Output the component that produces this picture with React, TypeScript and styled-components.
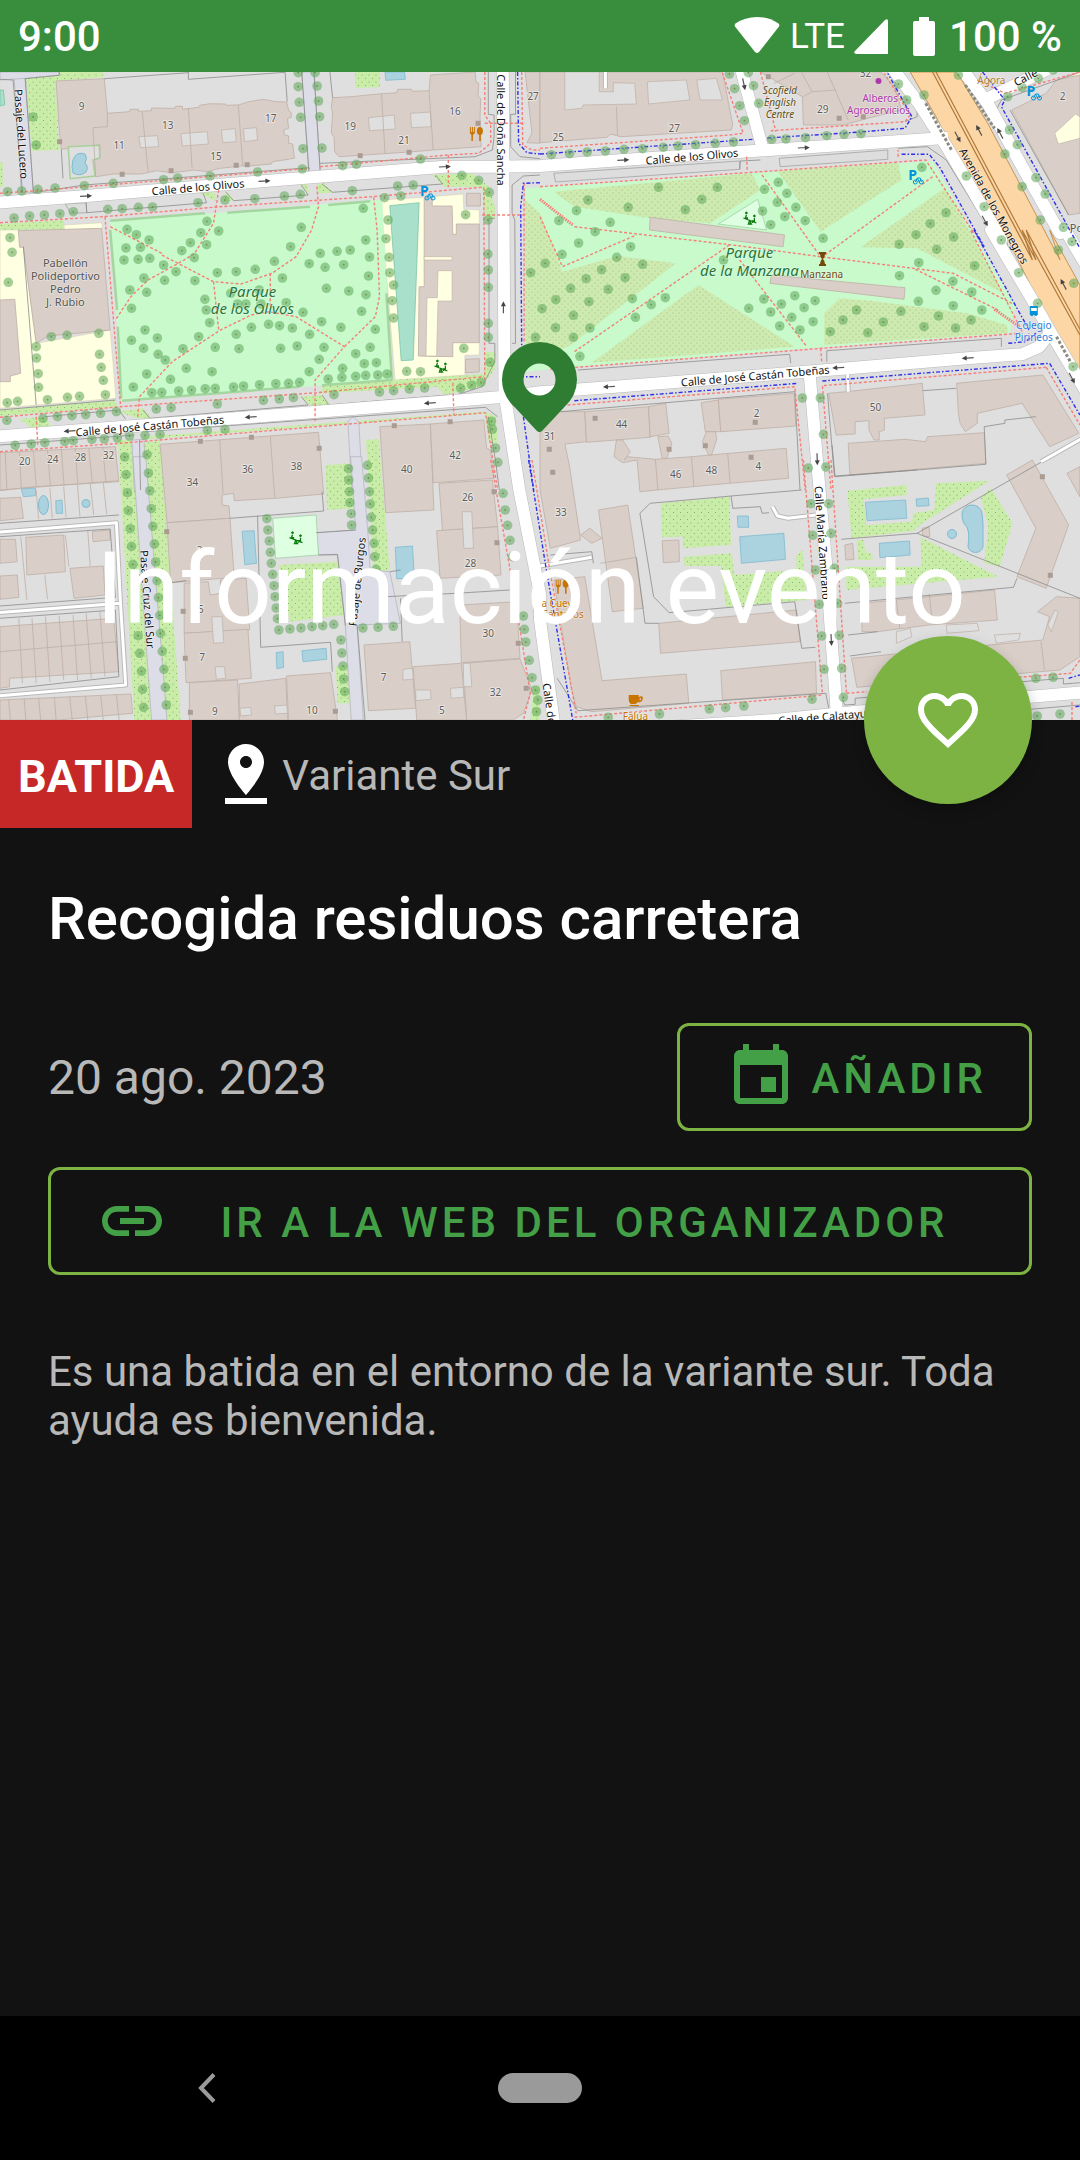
import React from "react";
import styled, { createGlobalStyle } from "styled-components";

/* ---------- global ---------- */

const GlobalStyle = createGlobalStyle`
  *, *::before, *::after { box-sizing: border-box; }
  body {
    margin: 0;
    background: #121212;
    font-family: Roboto, "Noto Sans", sans-serif;
  }
  h1, h2, p { margin: 0; }
`;

const Screen = styled.div`
  display: flex;
  flex-direction: column;
  min-height: 100vh;
  background: #121212;
  color: #ffffff;
`;

/* ---------- status bar ---------- */

const StatusBar = styled.header`
  display: flex;
  align-items: center;
  justify-content: space-between;
  height: 72px;
  padding: 2px 18px 0;
  background: #388e3c;
  font-size: 42px;
  font-weight: 500;
  line-height: 48px;
`;

const StatusIcons = styled.div`
  display: flex;
  align-items: center;
`;

const Network = styled.span`
  margin: 0 8px 0 10px;
  font-size: 35px;
  font-weight: 400;
`;

const Percent = styled.span`
  margin-left: 14px;
`;

/* ---------- hero ---------- */

const Hero = styled.section`
  position: relative;
  height: 648px;
`;

const MapCanvas = styled.svg`
  display: block;
  width: 100%;
  height: 100%;
  background: #dfdfdf;
`;

const HeroTitle = styled.h1`
  position: absolute;
  left: 96px;
  bottom: 71px;
  font-size: 101px;
  font-weight: 400;
  line-height: 120px;
  white-space: nowrap;
`;

const FavoriteButton = styled.button`
  position: absolute;
  right: 48px;
  bottom: -84px;
  display: flex;
  align-items: center;
  justify-content: center;
  width: 168px;
  height: 168px;
  padding: 0;
  border: 0;
  border-radius: 50%;
  background: #7cb342;
  color: #ffffff;
  box-shadow: 0 6px 14px rgba(0, 0, 0, 0.24);
`;

/* ---------- event details ---------- */

const TagRow = styled.div`
  display: flex;
  align-items: center;
  height: 108px;
`;

const Tag = styled.span`
  display: flex;
  align-items: center;
  height: 100%;
  padding: 4px 18px 0;
  background: #c62828;
  font-size: 45px;
  font-weight: 700;
`;

const Place = styled.span`
  display: flex;
  align-items: center;
  margin-left: 18px;
  color: #b8b8b8;
  font-size: 42px;
`;

const PlaceIcon = styled.span`
  display: flex;
  color: #ffffff;
`;

const PlaceName = styled.span`
  padding-top: 2px;
`;

const Details = styled.main`
  display: flex;
  flex-direction: column;
  padding: 56px 48px 48px;
`;

const EventName = styled.h2`
  font-size: 60px;
  font-weight: 500;
  line-height: 70px;
`;

const DateRow = styled.div`
  display: flex;
  align-items: center;
  justify-content: space-between;
  margin-top: 69px;
`;

const EventDate = styled.time`
  padding-top: 2px;
  color: #b8b8b8;
  font-size: 48px;
  line-height: 56px;
`;

const OutlinedButton = styled.button`
  display: flex;
  align-items: center;
  gap: 14px;
  height: 108px;
  padding: 0 42px 0 45px;
  border: 3px solid #7cb342;
  border-radius: 12px;
  background: transparent;
  color: #43a047;
  font-family: inherit;
  font-size: 42px;
  font-weight: 500;
  letter-spacing: 4px;
  text-transform: uppercase;
`;

const WideButton = styled(OutlinedButton)`
  width: 100%;
  margin-top: 36px;
`;

const ButtonLabel = styled.span`
  flex: 1;
  padding-top: 2px;
  text-align: center;
  white-space: nowrap;
`;

const Description = styled.p`
  margin-top: 72px;
  color: #b8b8b8;
  font-size: 42px;
  line-height: 49px;
`;

/* ---------- navigation bar ---------- */

const NavBar = styled.nav`
  display: grid;
  grid-template-columns: repeat(3, 1fr);
  align-items: center;
  justify-items: center;
  height: 144px;
  margin-top: auto;
  padding: 0 41px;
  background: #000000;
`;

const NavButton = styled.button`
  display: flex;
  align-items: center;
  justify-content: center;
  width: 120px;
  height: 96px;
  padding: 0;
  border: 0;
  background: transparent;
  color: #9a9a9a;
`;

const HomePill = styled.span`
  width: 84px;
  height: 30px;
  border-radius: 15px;
  background: #9a9a9a;
`;

/* ---------- icons ---------- */

const Icon = ({ d }: { d: string }) => (
  <svg width="72" height="72" viewBox="0 0 24 24" fill="currentColor" aria-hidden="true">
    <path d={d} />
  </svg>
);

const ICONS = {
  heart:
    "M16.5 3c-1.74 0-3.41.81-4.5 2.09C10.91 3.81 9.24 3 7.5 3 4.42 3 2 5.42 2 8.5c0 3.78 3.4 6.86 8.55 11.54L12 21.35l1.45-1.32C18.6 15.36 22 12.28 22 8.5 22 5.42 19.58 3 16.5 3zm-4.4 15.55l-.1.1-.1-.1C7.14 14.24 4 11.39 4 8.5 4 6.5 5.5 5 7.5 5c1.54 0 3.04.99 3.57 2.36h1.87C13.46 5.99 14.96 5 16.5 5c2 0 3.5 1.5 3.5 3.5 0 2.89-3.14 5.74-7.9 10.05z",
  pinDrop:
    "M18 8c0-3.31-2.69-6-6-6S6 4.69 6 8c0 4.5 6 11 6 11s6-6.5 6-11zm-8 0c0-1.1.9-2 2-2s2 .9 2 2-.89 2-2 2-2-.9-2-2zM5 20v2h14v-2H5z",
  event:
    "M17 12h-5v5h5v-5zM16 1v2H8V1H6v2H5c-1.11 0-1.99.9-1.99 2L3 19c0 1.1.89 2 2 2h14c1.1 0 2-.9 2-2V5c0-1.1-.9-2-2-2h-1V1h-2zm3 18H5V8h14v11z",
  link:
    "M3.9 12c0-1.71 1.39-3.1 3.1-3.1h4V7H7c-2.76 0-5 2.24-5 5s2.24 5 5 5h4v-1.9H7c-1.71 0-3.1-1.39-3.1-3.1zM8 13h8v-2H8v2zm9-6h-4v1.9h4c1.71 0 3.1 1.39 3.1 3.1s-1.39 3.1-3.1 3.1h-4V17h4c2.76 0 5-2.24 5-5s-2.24-5-5-5z",
};

/* ---------- map data ---------- */

/* Each sheet stores its points in its own grid; SHEETS gives the sheet origins on the map. */
type Sheet = "A" | "B" | "C" | "D" | "E" | "F";
const SHEETS: Record<Sheet, [number, number]> = {
  A: [0, 0],
  B: [540, 0],
  C: [0, 230],
  D: [540, 230],
  E: [0, 460],
  F: [540, 460],
};

const place = (s: Sheet, x: number, y: number): [number, number] => [
  Math.round((SHEETS[s][0] + x / 2.904) * 10) / 10,
  Math.round((SHEETS[s][1] + y / 3) * 10) / 10,
];

/* "A 1,2 3,4 C 5,6" -> map points, switching sheet at each letter */
const trace = (line: string): [number, number][] => {
  let sheet: Sheet = "A";
  const out: [number, number][] = [];
  line.split(/\s+/).forEach((token) => {
    if (token in SHEETS) sheet = token as Sheet;
    else if (token) {
      const [x, y] = token.split(",").map(Number);
      out.push(place(sheet, x, y));
    }
  });
  return out;
};

const points = (line: string) => trace(line).map((p) => p.join(",")).join(" ");

const Areas = ({ list, ...rest }: { list: string[] } & React.SVGProps<SVGPolygonElement>) => (
  <>
    {list.map((l, i) => (
      <polygon key={i} points={points(l)} {...(rest as any)} />
    ))}
  </>
);

const Lines = ({ list, ...rest }: { list: string[] } & React.SVGProps<SVGPolylineElement>) => (
  <>
    {list.map((l, i) => (
      <polyline key={i} points={points(l)} fill="none" {...(rest as any)} />
    ))}
  </>
);

const PARKS = [
  "A 320,665 1085,600 1110,600 1140,1140 355,1205",
  "D -43,-125 630,-172 1140,-207 1380,230 1365,310 820,352 60,415 -43,425",
];
const SCRUB = [
  "B 40,575 615,520 640,570 495,670 320,655 100,620",
  "B 690,513 1040,488 1050,540 815,695",
  "B 1175,565 1230,660 1345,880 1095,745 930,742",
  "D -43,-90 0,-50 65,125 225,78 395,100 90,345 20,380 -43,340",
  "D 460,165 740,350 150,398",
  "D 825,250 870,205 960,212 1240,250 1355,285 1360,310 825,345",
];
const GRASS = [
  "A 75,235 160,228 172,450 92,453",
  "A 160,228 170,216 300,216 300,232 163,243",
  "A 1030,216 1103,216 1103,262 1033,264",
  "A 0,485 8,490 8,560 0,560",
  "A 0,672 185,660 187,688 0,690",
  "A 185,615 215,612 225,640",
  "A 580,580 620,575 630,605",
  "A 655,572 680,600 650,605",
  "A 870,555 890,550 900,582",
  "A 920,552 940,550 968,578 925,580",
  "A 1255,525 1370,520 1420,560 1437,620 1437,655 1410,655 1400,560 1290,560",
  "C 0,540 335,510 340,530 0,558",
  "C 55,567 130,560 150,590 95,595",
  "C 345,545 415,535 440,565 400,565",
  "C 870,500 935,495 960,525 905,528",
  "C 935,465 1405,432 1412,366 1440,366 1436,420 1395,470 1290,495 1270,470 935,490",
  "C 415,620 1410,545 1440,560 1445,640 1420,640 1408,550 420,628",
  "E 342,-60 383,-60 440,780 390,780",
  "E 415,-50 465,-60 525,780 465,780",
  "E 945,15 1025,10 1028,145 950,150",
  "E 1063,-60 1100,-62 1132,330 1085,335",
  "E 810,315 985,305 998,465 842,485",
  "E 975,620 1010,615 1015,730 980,730",
  "E 1550,680 1568,675 1568,780 1540,780",
  "F 350,130 550,110 555,255 415,265 415,230 355,232",
  "F 418,290 557,280 565,345 720,332 745,325 745,285 762,270 775,420 540,440 525,318 420,318",
  "F 893,92 1065,75 1065,105 940,118 947,195 1080,185 1085,160 1145,150 1150,70 1305,62 1110,190 1085,212 905,235",
  "F 1105,232 1330,350 890,390 888,320 1108,320",
  "F 920,240 940,240 945,278 965,280 965,300 925,300",
  "F 1280,112 1310,85 1372,190 1335,320 1290,310 1302,200",
];
const SCHOOL = [
  "A 0,690 53,690 68,742 105,1030 320,990 337,1195 0,1225",
  "A 185,675 295,668 298,685 187,692",
  "A 1105,600 1228,592 1345,582 1347,628 1392,630 1392,1065 1350,1066 1350,1125 1147,1140",
  "B 1515,245 1568,216 1568,248 1525,262",
];
const SQUARES = [
  "A 40,216 73,216 97,578 62,578",
  "A 0,216 172,216 172,225 73,235 0,240",
  "A 876,216 912,216 930,515 897,515",
  "C 383,630 418,628 425,780 390,780",
  "E 386,-10 423,-10 485,780 440,780",
  "C 1010,575 1025,560 1042,575 1053,780 1022,780",
  "E 1018,-10 1050,-10 1068,215 1075,330 1132,335 1163,490 1037,495 1055,780 1020,780 1003,497 980,285 925,285 918,218 1033,210",
];
const BUILDINGS = [
  "A 163,243 303,236 312,340 375,335 378,328 402,328 402,334 440,332 440,324 508,325 510,319 530,319 530,328 578,322 580,316 610,311 655,312 657,316 692,315 722,305 765,298 800,305 832,306 838,330 846,340 846,352 835,356 838,385 824,390 826,404 838,408 838,430 850,432 855,475 792,485 788,492 720,498 700,498 640,505 600,515 565,510 500,518 455,512 410,522 330,522 278,530 270,480 290,475 290,434 178,448 173,400",
  "A 966,293 1020,290 1060,286 1108,281 1152,278 1155,268 1195,268 1198,274 1246,272 1250,225 1380,216 1382,245 1390,250 1388,290 1396,295 1394,350 1397,440 1258,450 1200,455 1060,465 985,470 972,455 970,410 962,400 966,340 962,320",
  "A 1525,216 1568,216 1568,430 1530,428 1545,400",
  "A 53,692 295,685 320,990 140,1008 105,1030 68,742 57,742",
  "C 0,210 43,208 60,430 30,438 30,455 0,455",
  "A 1232,595 1255,595 1255,618 1313,618 1315,703 1325,703 1325,672 1392,672 1392,1028 1315,1028 1315,1070 1215,1068 1217,860 1232,860",
  "A 1355,580 1395,580 1395,618 1355,618",
  "C 1352,388 1392,386 1392,426 1352,428",
  "B 0,216 530,216 560,375 555,390 235,410 205,402 195,412 0,428",
  "B 640,216 990,216 1030,260 1050,330 970,350 880,375 765,375 762,290",
  "B 1370,330 1470,280 1500,240 1568,225 1568,640 1535,645",
  "B 320,652 710,705 706,740 318,690",
  "D 672,135 1060,173 1057,208 668,160",
  "C 0,668 335,650 345,755 100,770 0,782",
  "C 465,643 925,607 940,792 800,805 680,812 678,790 645,795 645,825 665,828 668,865 485,878",
  "E 1103,-100 1250,-108 1260,150 1120,158",
  "E 1250,-108 1405,-120 1413,-35 1425,-30 1435,55 1258,68",
  "E 1275,70 1430,60 1445,200 1285,212",
  "E 1268,212 1445,200 1455,345 1278,355",
  "E 1335,435 1500,425 1510,595 1340,608",
  "E 1345,610 1510,597 1545,690 1520,760 1490,780 1355,780",
  "E 1057,555 1190,545 1207,745 1070,752",
  "E 1200,620 1340,610 1355,780 1210,780",
  "E 485,188 668,175 680,352 495,368",
  "E 535,370 605,365 610,405 640,400 640,360 715,355 725,510 535,520",
  "E 535,520 720,508 730,655 540,668",
  "E 550,668 690,660 695,780 550,780",
  "E 695,672 830,655 835,780 695,780",
  "E 832,648 960,638 980,780 838,780",
  "E 75,232 185,225 190,335 78,345",
  "E 203,325 300,318 305,405 215,415",
  "E 0,238 45,238 50,305 0,310",
  "E 0,348 50,345 55,412 0,418",
  "E 268,215 318,210 320,240 270,245",
  "E 0,500 330,475 345,635 28,655 28,680 0,685",
  "E 0,720 380,702 385,760 170,780 0,780",
  "E 0,115 60,112 68,175 0,182",
  "D 0,545 130,545 135,635 72,642 85,705 118,930 30,955 0,780",
  "D 130,545 315,530 320,622 135,637",
  "D 315,530 365,520 375,610 320,620",
  "D 468,518 518,510 525,605 480,605",
  "D 518,508 738,490 743,588 525,605",
  "D 222,630 240,630 262,665 245,690 255,680 335,688 440,680 715,655 722,745 550,760 340,780 290,785 282,690 240,698 215,680",
  "D 342,620 372,618 383,640 368,685 355,685",
  "D 483,605 510,605 513,628 498,675 490,675 472,635",
  "D 838,490 890,485 1110,460 1118,555 1000,565 1000,600 985,605 985,630 970,630 955,600 955,572 915,575 915,612 860,615",
  "D 895,640 1060,628 1120,635 1125,620 1290,608 1295,700 900,735",
  "D 1210,460 1460,435 1565,610 1480,650 1400,520 1270,550 1270,580 1235,605 1220,580 1215,550",
  "F 1355,45 1430,0 1535,195 1470,385 1385,350 1440,205",
  "F 170,150 255,135 300,445 210,455",
  "F 118,225 145,205 180,235 150,250",
  "F 355,242 403,240 405,305 358,308",
  "F 40,360 130,350 180,662 425,642 432,730 150,755 105,740 90,680",
  "F 345,490 745,450 755,545 350,580",
  "F 525,632 800,605 803,700 530,720",
  "F 935,430 1320,390 1328,480 1130,495 980,515 935,515",
  "F 905,595 1100,575 1460,540 1480,470 1445,455 1500,410 1568,415 1568,590 1510,630 920,682",
  "F 885,255 908,250 912,298 888,300",
  "F 1110,205 1130,200 1132,230 1112,228",
  "F 1530,40 1568,20 1568,110",
];
const COURTS = [
  "A 403,410 457,407 461,440 408,443",
  "A 525,401 602,395 605,432 530,438",
  "A 643,390 683,386 686,425 647,428",
  "A 707,386 745,383 748,420 710,425",
  "A 1070,353 1145,345 1148,387 1073,392",
  "A 1192,340 1250,336 1252,380 1195,383",
  "B 72,216 172,216 172,275 213,275 213,248 275,250 280,312 125,315 122,325 72,330",
  "B 312,245 425,240 435,300 315,312",
  "B 455,240 512,235 530,300 465,300",
  "E 615,470 645,470 650,548 620,550",
  "E 625,620 652,620 655,655 628,658",
  "E 1342,155 1370,155 1375,265 1347,265",
  "E 1345,610 1365,610 1370,680 1347,680",
  "E 1170,628 1198,625 1200,658 1170,660",
  "E 1207,690 1250,690 1252,718 1208,722",
  "E 1308,685 1345,682 1347,712 1310,715",
  "E 797,738 833,735 835,760 800,762",
  "E 697,745 728,742 730,765 699,768",
  "F 1035,515 1075,505 1080,530 1035,550",
  "F 1180,495 1270,490 1275,512 1182,520",
  "F 1320,525 1395,520 1390,540 1325,550",
  "F 1475,495 1495,450 1505,455 1485,515",
];
const WATER = [
  "A 1118,216 1175,216 1177,238 1120,241",
  "F 945,127 1062,120 1065,175 950,182",
  "F 1092,117 1128,114 1130,137 1094,139",
  "F 985,250 1073,243 1075,285 987,293",
  "F 580,230 708,220 713,298 585,310",
  "F 573,168 605,168 606,202 575,202",
  "E 703,214 738,212 745,310 711,314",
  "E 1148,262 1198,258 1203,355 1152,356",
  "E 877,572 947,565 949,598 880,605",
  "E 802,578 822,575 824,622 804,626",
  "E 62,87 103,84 103,107 68,110",
  "E 162,122 180,120 182,160 163,160",
];
const PITCHES = ["A 1132,617 1217,608 1200,1080 1165,1082", "A 0,270 10,270 14,314 0,318"];
const YARDS = [
  "C 1272,122 1313,122 1313,213 1272,213 1268,378 1237,378 1240,203 1270,203",
  "C 1232,80 1313,80 1313,90 1232,90",
  "B 1495,400 1555,342 1568,350 1568,415 1505,432",
];
const PLAYGROUNDS = ["E 792,175 918,165 925,285 800,295", "B 632,598 658,690 518,672"];
const PARKING = [
  "A 190,612 250,608 252,638 205,640",
  "B 40,520 580,483 580,508 45,546",
  "B 695,475 1010,450 1010,478 697,500",
];

const WALLS = [
  "A 413,335 430,515", "A 547,325 558,505", "A 692,315 705,498", "A 270,383 312,380", "A 270,383 278,530", "A 312,340 312,380",
  "A 1108,281 1118,460", "A 1246,272 1258,450", "B 222,320 225,405",
  "B 760,218 790,275 765,290", "B 790,275 860,270", "B 835,218 895,360", "B 680,250 740,220",
  "C 638,630 648,790", "C 785,618 798,805",
  "C 15,665 20,780", "C 56,665 62,775", "C 97,660 105,770", "C 138,660 146,765", "C 178,658 186,765", "C 218,655 226,760", "C 258,655 268,760", "C 298,652 308,760",
  "D 335,688 342,780", "D 440,680 447,770", "D 545,670 552,760",
  "E 0,575 340,545", "E 55,475 65,670", "E 93,475 105,670", "E 132,470 145,665", "E 172,468 185,660", "E 212,465 225,660", "E 250,460 265,655", "E 290,455 305,650",
  "E 25,720 30,780", "E 70,715 75,780", "E 112,713 118,780", "E 158,712 163,780", "E 202,710 210,780", "E 248,708 255,780", "E 292,706 300,780", "E 338,704 346,780",
  "E 105,90 112,178", "E 145,85 152,175", "E 185,80 192,172", "E 225,75 232,170", "E 262,70 272,165", "E 300,68 310,162",
  "E 60,230 78,420", "E 130,345 138,418", "E 190,225 200,320", "E 255,212 262,318", "E 0,90 345,62",
  "F 175,310 280,292", "F 1035,420 1045,505", "F 1130,402 1140,490", "F 1455,545 1465,630",
];
const FENCES = [
  "A 303,236 547,218", "A 547,216 547,238 828,217 834,305", "A 958,216 966,293", "A 172,216 172,226 73,236", "A 178,448 183,535",
  "A 0,238 38,240 65,575", "A 73,235 97,578 245,555 897,503", "A 876,216 897,515", "A 912,216 930,515", "A 930,490 1380,470 1430,450 1435,410 1435,345 1418,343 1418,216",
  "A 1497,216 1497,343 1483,343 1483,440 1510,470 1568,476", "A 1568,525 1520,528 1487,555 1487,640 1495,660 1497,1030 1487,1030",
  "A 250,608 252,638 600,608 590,580", "A 655,575 678,602 895,585 875,555", "A 935,552 965,577 1285,552 1265,525",
  "A 1437,655 1420,655 1420,1030 1437,1030 C 1437,395 1400,470 1325,495",
  "C 68,50 105,525", "C 0,540 335,510", "C 130,560 345,540 365,568", "C 415,540 435,565 895,525 875,500", "C 935,495 955,525 1300,495",
  "C 0,645 390,615", "C 420,605 1410,532 1445,560", "C 405,630 408,780", "C 1418,560 1440,700 1450,780",
  "D 110,420 725,373 728,400", "D 833,395 833,362 1340,325 1340,350", "D 60,545 740,485 755,780",
  "D 1112,482 1208,475", "D 848,645 857,740 1295,703 1290,590 1350,580 1350,570 1440,560", "D 835,490 855,740",
  "F 857,48 1095,30", "F 1095,220 1568,-60", "F 1095,220 1568,415", "F 875,238 1095,220", "F 290,160 320,130 555,108 560,145 640,140 645,160 665,158",
  "F 290,160 330,410 375,458 740,425 760,565 800,562", "F 555,108 760,90", "F 280,292 305,490 345,490", "F 885,430 1375,382 1385,355",
  "F 30,285 150,275 155,310", "F 895,525 980,515", "F 900,588 990,575",
  "F 50,655 110,752 830,700 845,780", "F 875,710 885,735 915,733 915,715 950,712", "F 1400,665 1520,655 1520,672 1568,668", "F 1400,750 1568,735",
  "E 668,175 940,153 935,95", "E 748,167 757,562 960,547 965,635", "E 918,218 1033,210", "E 1132,335 1163,330", "E 1120,410 1325,400 1480,390",
  "E 1163,415 1168,545", "E 0,190 345,165", "E 0,230 320,207 335,412 0,438", "E 0,475 335,450 345,650 0,690", "E 495,368 540,362", "E 1037,495 1060,780", "E 925,285 980,283 1003,497",
  "B 1320,340 1340,300 1568,216", "B 1320,340 1330,370 1568,790", "B 1365,330 1535,645", "B 1040,445 1125,440 1180,480 1370,800", "B 1060,365 1095,350 1095,300", "B 580,508 582,483 640,480",
];

const DASHED_RED = [
  "A 0,580 110,572 900,505", "A 930,500 1300,465 1390,460 1425,430 1425,370 1408,345 1408,216",
  "A 0,668 300,650 640,620 1080,590 1400,562", "A 1405,562 1408,1140", "A 305,650 350,1215",
  "C 0,562 350,530 920,488 1405,440", "C 0,665 350,640 920,590 1410,548 1445,780", "C 105,560 110,650", "C 1315,460 1318,555",
  "A 320,680 470,760 C 470,75 620,155 700,162 790,130 860,80 905,0 A 925,620 920,555",
  "A 635,570 620,670 565,760 C 535,90 430,150 380,200 335,270",
  "C 620,155 635,300", "C 785,130 785,230",
  "C 400,560 405,500 500,395 640,300 730,255 780,245 860,260 1000,350 915,450 915,580", "C 1000,350 1090,260 1102,200 1095,0 A 1085,590",
  "A 1302,465 1302,562", "A 1400,645 1525,645", "A 1408,370 1525,370",
  "B 0,445 550,405 590,400 530,220", "B 640,216 685,395", "B 670,392 1060,365 1075,345 1000,220",
  "A 1515,216 1518,435 1545,450 1568,450",
  "B 0,560 600,518 1120,480 1260,700 D 1250,0 1400,305", "D 30,418 820,355 1395,310",
  "B 100,680 560,735 815,770 D 1200,130 1370,220", "D 1090,118 1330,240",
  "B 1140,530 820,770", "B 645,525 815,770", "B 0,650 65,800 280,705", "D 550,45 100,365", "D 580,90 775,350", "B 600,470 602,515", "D 815,355 818,395",
  "B 1040,470 1040,450", "B 1270,240 1350,280 1568,216",
  "D 80,525 740,470 770,780", "D 1470,412 820,467 845,780", "D 1470,412 1568,585", "F 765,0 820,700", "F 845,0 890,700",
  "F 100,772 820,705", "F 890,700 950,695", "F 1390,652 1540,640 1568,600", "F 1545,780 1545,720",
  "E 1425,0 1490,380 1540,700 1520,780", "E 1545,0 F 30,340 105,760", "A 1522,550 1522,1030",
];
const DASHED_BLUE = [
  "A 1503,216 1506,430 1530,458 1568,462", "A 1568,548 1520,550 1512,620 1515,1050",
  "B 0,462 620,418", "B 660,414 930,396 1060,385 1080,350 1010,220", "B 1050,463 1130,463 1160,500 1290,740 D 1260,0 1420,300",
  "B 1285,216 1350,300 1340,320 1568,745", "D 100,512 750,460", "D 820,453 1480,400 1568,555",
  "D 1360,340 1410,335 1440,310", "C 1510,440 1568,440", "C 1520,560 1550,780", "E 1535,0 F 20,340 95,780", "F 1535,655 1568,645", "F 1555,740 1568,738",
];

const TREES =
  "A 22,575 63,573 110,568 160,564 245,557 329,550 475,539 516,534 610,528 748,516 878,507 995,497 1035,493 1221,477 41,654 86,648 129,645 174,641 213,635 313,628 355,626 402,622 443,621 575,608 653,600 740,596 826,588 872,583 1023,572 1155,558 1200,555 1117,593 1164,588 1341,526 1390,541 1421,577 1417,660 1417,762 1127,660 1121,716 1130,772 1352,644 96,351 105,435 866,260 869,307 873,352 880,446 921,258 925,303 928,350 935,444 866,218 915,218 29,713 35,757 369,688 396,704 433,720 366,744 408,742 601,664 583,698 553,728 528,752 635,693 600,734 564,773 875,682 844,740 1055,625 1062,720 1073,771 930,760 979,754 1017,750 " +
  "C 360,90 401,88 435,85 475,105 511,125 478,151 566,152 418,144 377,180 426,187 382,235 631,128 686,125 741,118 797,94 820,144 898,101 944,112 998,104 1070,138 948,175 1013,183 1063,194 1050,244 595,208 599,240 609,278 670,190 690,222 714,222 758,222 753,180 831,218 880,247 934,275 990,292 1090,298 421,300 457,324 382,331 417,355 459,373 480,390 577,320 531,356 541,415 616,425 625,352 694,356 686,313 730,292 780,283 812,287 849,294 899,313 815,355 863,348 941,352 927,388 898,425 1033,371 1075,352 1058,401 1093,398 1124,432 1097,435 1062,436 1033,439 995,415 993,442 953,447 426,432 387,471 495,448 441,488 470,487 519,483 556,480 596,476 625,475 678,471 707,468 754,464 801,461 838,460 870,457 24,157 149,320 195,316 287,310 105,350 106,384 111,431 112,472 138,509 196,502 231,499 306,494 300,451 294,412 289,373 21,518 51,514 1132,128 1143,165 1139,212 1143,264 1181,424 1221,425 1347,355 1418,120 1418,172 1418,280 1418,322 1423,397 1397,457 1370,465 1338,475 1541,128 1555,322 454,537 497,533 631,522 765,511 811,507 852,503 970,494 1102,486 1143,482 1189,477 1233,474 20,571 125,565 167,560 209,557 249,554 292,550 338,545 44,646 91,642 130,638 188,635 213,632 267,628 303,627 341,624 376,618 421,616 465,613 602,601 653,598 362,681 427,674 1012,716 1067,706 1427,574 1430,598 1439,654 1446,697 " +
  "E 366,44 431,39 370,98 435,92 373,152 439,146 378,206 444,199 382,259 448,252 386,313 452,306 456,362 460,413 464,466 401,527 466,520 406,580 471,574 411,634 476,628 414,688 480,682 417,742 483,735 1013,60 1070,54 1015,95 1073,95 1016,128 1075,132 1020,161 1078,172 1021,195 1082,210 1086,250 1088,290 1092,328 775,176 778,210 782,243 785,277 788,310 792,343 796,377 799,410 802,444 806,476 810,510 842,507 874,504 906,500 937,497 969,493 1054,504 1098,502 1142,499 990,540 993,579 996,618 998,657 1001,695 1461,100 1467,150 1474,196 1481,241 1489,290 1520,468 1523,508 1527,546 1537,601 1545,653 1555,690 1562,720 1558,755 " +
  "B 550,222 605,218 565,266 620,257 580,317 635,310 594,362 33,464 86,461 137,456 190,453 244,448 298,446 358,442 401,438 452,434 509,430 562,426 673,418 714,417 771,413 833,407 883,403 932,401 344,562 515,562 139,600 106,632 256,622 470,598 422,629 55,662 204,667 160,695 112,729 64,763 263,740 223,772 646,633 652,568 692,547 717,580 689,607 743,622 711,650 770,662 670,674 822,715 1109,502 1179,638 1133,671 1092,704 1043,733 1201,711 1152,748 1238,528 1290,620 1340,720 1350,462 1400,560 1453,660 1505,750 1041,252 1065,300 1115,285 1215,225 1363,390 1386,434 1440,533 1467,582 1520,682 1545,725 1400,262 1447,235 1358,290 1490,210 " +
  "D 15,100 89,175 46,209 6,236 97,256 45,293 145,294 97,322 116,379 179,119 134,146 247,143 298,103 198,178 142,215 268,206 323,224 364,203 277,262 533,90 606,235 650,207 670,246 701,222 740,197 767,233 799,212 731,262 696,288 755,300 793,275 843,305 880,270 919,240 997,276 952,308 1048,244 1115,290 1157,258 1207,294 1252,270 1283,240 1200,227 1254,186 1199,154 1150,181 1099,214 1044,137 1100,98 1262,107 762,504 814,504 823,613 779,714 830,711 1390,128 1445,220 1550,160 1548,410 " +
  "F 787,131 838,131 792,226 845,220 800,330 855,325 811,433 864,430 818,528 869,526 825,628 876,625 790,718 881,712 198,772 347,762 492,747 539,743 592,738 1440,655 1490,652 1444,768 1510,762";

const ENTRANCES =
  "A 173,425 355,523 497,512 686,496 718,494 1046,467 1188,457 1388,370 C 582,634 730,622 927,655 1145,587 1307,575 E 484,215 532,454 538,595 553,757 974,754 1435,95 1443,248 1505,550 1528,685 B 663,230 869,355 939,350 D 160,565 375,658 480,647 625,577 613,682 27,658 37,727 F 1482,346 1459,50";

const NUMBERS: [Sheet, number, number, string][] = [
  ["A", 237, 319, "9"], ["A", 346, 435, "11"], ["A", 487, 374, "13"], ["A", 627, 469, "15"], ["A", 786, 354, "17"],
  ["A", 1017, 377, "19"], ["A", 1173, 420, "21"], ["A", 1321, 334, "16"], ["A", 1548, 287, "27"],
  ["B", 53, 412, "25"], ["B", 390, 385, "27"], ["B", 821, 326, "29"], ["B", 945, 220, "32"], ["B", 1518, 287, "2"],
  ["C", 72, 693, "20"], ["C", 153, 686, "24"], ["C", 234, 680, "28"], ["C", 315, 674, "32"],
  ["C", 559, 757, "34"], ["C", 719, 716, "36"], ["C", 861, 707, "38"], ["C", 1181, 716, "40"], ["C", 1322, 674, "42"],
  ["D", 28, 618, "31"], ["D", 237, 582, "44"], ["D", 629, 550, "2"], ["D", 974, 530, "50"],
  ["D", 394, 732, "46"], ["D", 498, 721, "48"], ["D", 634, 708, "4"],
  ["E", 1358, 110, "26"], ["E", 1366, 308, "28"], ["E", 1418, 520, "30"], ["E", 1439, 696, "32"], ["E", 580, 270, "3"], ["E", 583, 447, "5"],
  ["E", 587, 590, "7"], ["E", 624, 753, "9"], ["E", 906, 749, "10"], ["E", 1114, 650, "7"], ["E", 1283, 750, "5"],
  ["F", 61, 157, "33"],
];

const STREETS: [Sheet, number, number, number, string][] = [
  ["A", 575, 562, -5, "Calle de los Olivos"],
  ["B", 441, 470, -5, "Calle de los Olivos"],
  ["C", 435, 588, -5, "Calle de José Castán Tobeñas"],
  ["D", 625, 438, -5, "Calle de José Castán Tobeñas"],
  ["A", 62, 402, 86, "Pasaje del Lucero"],
  ["A", 1456, 390, 90, "Calle de Doña Sancha"],
  ["B", 1318, 618, 61, "Avenida de los Monegros"],
  ["E", 428, 418, 86, "Pasaje Cruz del Sur"],
  ["E", 1037, 365, -84, "Pasaje de Burgos"],
  ["F", 820, 248, 86, "Calle María Zambrano"],
  ["F", 830, 770, -5, "Calle de Calatayud"],
  ["F", 35, 790, 82, "Calle de Burgos"],
  ["B", 1410, 232, -27, "Calle"],
];

type Poi = [Sheet, number, number, string, string, number, boolean];
const POIS: Poi[] = [
  ["C", 733, 188, "Parque", "#2a7539", 15, true],
  ["C", 733, 241, "de los Olivos", "#2a7539", 15, true],
  ["D", 608, 72, "Parque", "#2a7539", 15, true],
  ["D", 608, 125, "de la Manzana", "#2a7539", 15, true],
  ["C", 190, 98, "Pabellón", "#555555", 11, false],
  ["C", 190, 137, "Polideportivo", "#555555", 11, false],
  ["C", 190, 177, "Pedro", "#555555", 11, false],
  ["C", 190, 217, "J. Rubio", "#555555", 11, false],
  ["B", 697, 271, "Scofield", "#5f5018", 10, true],
  ["B", 697, 307, "English", "#5f5018", 10, true],
  ["B", 697, 343, "Centre", "#5f5018", 10, true],
  ["B", 988, 293, "Alberos", "#ac39ac", 10, false],
  ["B", 983, 329, "Agroservicios", "#ac39ac", 10, false],
  ["B", 1311, 241, "Ágora", "#b08030", 10, false],
  ["B", 1562, 684, "Pol", "#555555", 11, false],
  ["D", 818, 131, "Manzana", "#734a08", 10, false],
  ["D", 1434, 284, "Colegio", "#2f7fe0", 10, false],
  ["D", 1434, 320, "Pirineos", "#2f7fe0", 10, false],
  ["F", 50, 428, "La Cueva", "#c77400", 10, false],
  ["F", 66, 463, "Cántaros", "#c77400", 10, false],
  ["F", 277, 768, "Falúa", "#c77400", 10, false],
];

const ARROWS: [Sheet, number, number, number][] = [
  ["A", 250, 588, -3], ["A", 768, 543, -3], ["A", 1292, 500, -3], ["B", 242, 480, -3], ["B", 766, 443, -3],
  ["C", 202, 603, 176], ["C", 728, 561, 176], ["C", 1248, 519, 176], ["C", 1462, 232, -90],
  ["D", 200, 470, 176], ["D", 866, 413, 176], ["D", 1242, 384, 176], ["D", 805, 688, 88], ["F", 846, 540, 87],
  ["B", 592, 253, 78], ["B", 1213, 411, 62], ["B", 1275, 391, -118], ["B", 1336, 400, -118], ["B", 1292, 663, 62], ["D", 1545, 445, 62], ["D", 1520, 163, -118],
];

const at = (s: Sheet, x: number, y: number) => `translate(${place(s, x, y).join(" ")})`;

const Bike = ({ s, x, y }: { s: Sheet; x: number; y: number }) => (
  <g transform={at(s, x, y)} stroke="#0092da" fill="none">
    <text x="-7" y="4" fontSize="14" fontWeight="700" fill="#0092da" stroke="none">P</text>
    <circle cx="0" cy="6" r="2" />
    <circle cx="6" cy="6" r="2" />
    <path d="M0 6l2-4h3l1 4M2 2l2 4" />
  </g>
);

const Seesaw = ({ s, x, y }: { s: Sheet; x: number; y: number }) => (
  <g transform={at(s, x, y)} fill="#0c7a0c" stroke="#0c7a0c">
    <circle cx="-3" cy="-5" r=".9" />
    <circle cx="5" cy="-2" r=".9" />
    <path d="M-3-3l-1 3h2v2M5 0v3h-2v2M-6 0L7 5M0 3l-1 3h3z" fill="none" strokeWidth="1.300" />
  </g>
);

const Fork = ({ s, x, y }: { s: Sheet; x: number; y: number }) => (
  <g transform={at(s, x, y)} fill="#c77400">
    <path d="M-6-7h1v5h1v-5h1v5h1v-5h1v6l-2 2v6h-1.500v-6l-1.500-2z" />
    <ellipse cx="4" cy="-3" rx="3" ry="4" />
    <path d="M3.300 0h1.600v7h-1.600z" />
  </g>
);

const StreetMap = () => (
  <MapCanvas viewBox="0 72 1080 648" preserveAspectRatio="xMidYMid slice" role="img" aria-label="Mapa">
    <defs>
      <pattern id="lawn" width="7" height="7" patternUnits="userSpaceOnUse">
        <rect width="7" height="7" fill="#c9eca8" />
        <circle cx="1.500" cy="1.500" r=".5" fill="#6f9f52" />
        <circle cx="5" cy="5" r=".5" fill="#6f9f52" />
      </pattern>
      <pattern id="scrub" width="6" height="6" patternUnits="userSpaceOnUse">
        <rect width="6" height="6" fill="#cdebb0" />
        <circle cx="1" cy="1" r=".5" fill="#96a56a" />
        <circle cx="4" cy="4" r=".5" fill="#96a56a" />
      </pattern>
    </defs>
    <rect y="72" width="1080" height="648" fill="#dfdfdf" />
    <Areas list={SCHOOL} fill="#ffffe2" stroke="#d8cfb8" strokeWidth=".6" />
    <Areas list={PARKS} fill="#c8facc" />
    <Areas list={SCRUB} fill="url(#scrub)" />
    <Areas list={GRASS} fill="url(#lawn)" />
    <Areas list={SQUARES} fill="#dddde8" stroke="#a9a9b4" strokeWidth=".6" />
    <Lines
      list={["A 320,662 595,640", "A 660,638 900,620", "A 953,615 1075,604", "A 320,690 340,930", "C 342,290 352,505", "C 1122,190 1138,448", "C 355,512 870,470", "C 935,466 1140,450"]}
      stroke="#a5d6a0" strokeWidth="2.500"
    />
    <Areas list={BUILDINGS} fill="#d9cfc8" stroke="#bfafa6" strokeWidth=".8" />
    <Areas list={COURTS} fill="#dfdfdf" stroke="#bfafa6" strokeWidth=".7" />
    <Areas list={YARDS} fill="#ffffe2" stroke="#bfafa6" strokeWidth=".6" />
    <Areas list={PARKING} fill="#dddddd" stroke="#9b9b9b" strokeWidth=".7" />
    <Areas list={PITCHES} fill="#a8e0cc" stroke="#7fc4a8" strokeWidth=".8" />
    <Areas list={PLAYGROUNDS} fill="#dfffe3" stroke="#9fcfa4" strokeWidth=".8" />
    <Areas list={WATER} fill="#aad3df" stroke="#7fbad0" strokeWidth=".8" />
    <Areas list={["A 198,440 288,436 290,473 270,480 276,528 204,536"]} fill="#dfdfdf" stroke="#a9cf9b" strokeWidth="1.500" />
    <path d="M73 160q3-9 12-6 3 4 0 9 4 4 1 9-6 5-13 1-2-6 0-13z" fill="#aad3df" stroke="#7fbad0" />
    <path d="M962 514a10 9 0 1 1 20 0q1 5 1 12t0 20a7 6 0 0 1-15 0q2-12-1-19-5-4-5-13z" fill="#aad3df" stroke="#7fbad0" />
    <circle cx="952" cy="534" r="4.500" fill="#aad3df" stroke="#7fbad0" />
    <ellipse cx="43.500" cy="505" rx="5" ry="9.500" fill="#aad3df" stroke="#7fbad0" />
    <circle cx="86" cy="503.500" r="4" fill="#aad3df" stroke="#7fbad0" />
    <Lines list={WALLS} stroke="#bfafa6" strokeWidth=".8" />
    <Lines list={FENCES} stroke="#8c8c8c" strokeWidth=".8" />

    {/* carriageways */}
    <Areas
      list={["B 1075,216 1150,350 1200,450 1370,780 D 1345,0 1450,220 1568,430 1568,165 1480,0 B 1510,780 1300,370 1210,216"]}
      fill="#fcd6a4" stroke="#c89450" strokeWidth="1"
    />
    <Lines list={["B 1140,216 1430,780 D 1400,0 1568,315", "B 1150,216 1440,780 D 1412,0 1568,298"]} stroke="#b07a3c" strokeWidth="1.200" />
    <g strokeLinejoin="round">
      {["#b9b9b9", "#ffffff"].map((color, i) => (
        <React.Fragment key={color}>
          <Lines
            list={[
              "A -20,609 250,588 770,543 1290,500 1440,500 B 0,498 240,480 760,443 1185,413",
              "A 1460,200 C 1465,490 1508,780 E 1568,400 F 0,480 42,800",
              "C -20,620 740,560 1250,518 1465,500 D 0,487 200,472 870,417 1240,385 1400,373 1450,350 1480,310",
              "B 582,200 645,440",
              "D 783,430 805,700 F 830,300 862,760",
              "F 200,812 680,780 950,752 1600,695",
              "B 1020,200 1100,310 1175,430 1250,560 1340,720 D 1310,0 1430,210 1490,320 1600,510",
              "B 1220,200 1300,310 1400,500 1510,700 D 1525,0 1600,130",
              "B 1300,295 1500,195",
            ]}
            stroke={color} strokeWidth={i ? 12 : 13}
          />
          <Lines
            list={["E -10,217 338,188 350,430 365,675 -10,708", "E -10,458 350,430", "D 893,420 895,485", "D 1455,695 1600,610", "F 0,318 150,292", "F 675,140 690,168 720,175 800,165", "B 190,200 190,265"]}
            stroke={color} strokeWidth={i ? 3 : 5}
          />
        </React.Fragment>
      ))}
    </g>

    <Lines list={DASHED_RED} stroke="#f58078" strokeWidth="1.400" strokeDasharray="3 2" />
    <Lines list={DASHED_BLUE} stroke="#3030ea" strokeWidth="1.400" strokeDasharray="4 2 1.500 2" />
    <Lines list={["B 0,598 95,675", "D 1320,238 1385,285"]} stroke="#f5807a" strokeWidth="3" strokeDasharray="1.500 1" />
    <Lines list={["B 1235,255 1320,385", "B 1120,310 1195,450", "D 1500,320 1540,395"]} stroke="#8a8a80" strokeWidth="3" strokeDasharray="3 2" />

    {trace(ENTRANCES).map(([x, y], i) => (
      <rect key={i} x={x - 2.5} y={y - 2.5} width="5" height="5" fill="#ab9c93" />
    ))}
    {trace(TREES).map(([x, y], i) => (
      <g key={i}>
        <circle cx={x} cy={y} r="4.800" fill="#5fa85a" fillOpacity=".56" />
        <circle cx={x} cy={y} r=".9" fill="#6a7a3c" fillOpacity=".7" />
      </g>
    ))}
    {ARROWS.map(([s, x, y, a], i) => (
      <g key={i} transform={`${at(s, x, y)} rotate(${a})`}>
        <path d="M-6 0H4" stroke="#555555" strokeWidth="1.200" />
        <path d="M1-2.500L6 0L1 2.500z" fill="#444444" />
      </g>
    ))}

    <g fontFamily="'Noto Sans', sans-serif" textAnchor="middle" strokeLinejoin="round">
      {NUMBERS.map(([s, x, y, t], i) => (
        <text key={i} transform={at(s, x, y)} y="4" fontSize="10" fill="#5c5c5c" stroke="#ebe6e2" strokeWidth="2" paintOrder="stroke">{t}</text>
      ))}
      {POIS.map(([s, x, y, t, color, size, italic], i) => (
        <text key={i} transform={at(s, x, y)} y="4" fontSize={size} fill={color} fontStyle={italic ? "italic" : "normal"} stroke="#ffffff" strokeOpacity=".4" strokeWidth="1.500" paintOrder="stroke">{t}</text>
      ))}
      {STREETS.map(([s, x, y, a, t], i) => (
        <text key={i} transform={`${at(s, x, y)} rotate(${a})`} y="4" fontSize="11" fill="#111111" stroke="#ffffff" strokeOpacity=".6" strokeWidth="1.500" paintOrder="stroke">{t}</text>
      ))}
    </g>

    <g fontFamily="'Noto Sans', sans-serif">
      <Bike s="A" x={1240} y={576} />
      <Bike s="B" x={1090} y={528} />
      <Bike s="B" x={1433} y={276} />
    </g>
    <Seesaw s="B" x={608} y={654} />
    <Seesaw s="C" x={1279} y={408} />
    <Seesaw s="E" x={858} y={233} />
    <Fork s="A" x={1382} y={402} />
    <Fork s="F" x={63} y={380} />
    <g transform={at("F", 275, 720)} fill="#c77400">
      <path d="M-6-5H4v2q5-2 4 2t-5 3q-1 2-3 2h-4q-2-2-2-4zM5-2v3q2-1 1-3zM-5 5H4v1h-9z" />
    </g>
    <path transform={at("D", 819, 87)} d="M-3-7h7v2h-1q0 3-2 5 2 2 2 5h1v2h-7v-2h1q0-3 2-5-2-2-2-5h-1z" fill="#734a08" />
    <path transform={at("D", 1434, 243)} d="M-4-5h8v9h-1v1h-2v-1h-2v1h-2v-1h-1zM-3-3v3h6v-3z" fill="#0092da" fillRule="evenodd" />
    <circle cx="878.500" cy="81" r="3" fill="#ac39ac" />

    {/* event marker */}
    <path
      d="M539.500 342a37.500 37.500 0 0 1 37.500 37.500q0 16-13 28l-21.500 23q-3 3-6 0l-21.500-23q-13-12-13-28A37.500 37.500 0 0 1 539.500 342zm0 21.500a16 16 0 1 0 0 32 16 16 0 0 0 0-32z"
      fill="#2e7d32" fillRule="evenodd"
    />
  </MapCanvas>
);

/* ---------- page ---------- */

export default function App() {
  return (
    <Screen>
      <GlobalStyle />
      <StatusBar>
        <span>9:00</span>
        <StatusIcons>
          <svg width="46" height="40" viewBox="0 0 46 40" fill="#ffffff" aria-hidden="true">
            <path d="M1 9.500Q0 8 1.500 6.500 11 0 23 0t21.500 6.500Q46 8 45 9.500L25 35q-2 2-4 0z" />
          </svg>
          <Network>LTE</Network>
          <svg width="36" height="36" viewBox="0 0 36 36" fill="#ffffff" aria-hidden="true">
            <path d="M32 1q3-2 3 1v33H3q-3-1-1-3z" />
          </svg>
          <svg width="46" height="40" viewBox="0 0 46 40" fill="#ffffff" aria-hidden="true">
            <path d="M30 0h10v4h4q2 0 2 2v31q0 2-2 2H26q-2 0-2-2V6q0-2 2-2h4z" />
          </svg>
          <Percent>100 %</Percent>
        </StatusIcons>
      </StatusBar>

      <Hero>
        <StreetMap />
        <HeroTitle>Información evento</HeroTitle>
        <FavoriteButton aria-label="Favorito">
          <Icon d={ICONS.heart} />
        </FavoriteButton>
      </Hero>

      <TagRow>
        <Tag>BATIDA</Tag>
        <Place>
          <PlaceIcon>
            <Icon d={ICONS.pinDrop} />
          </PlaceIcon>
          <PlaceName>Variante Sur</PlaceName>
        </Place>
      </TagRow>

      <Details>
        <EventName>Recogida residuos carretera</EventName>
        <DateRow>
          <EventDate dateTime="2023-08-20">20 ago. 2023</EventDate>
          <OutlinedButton>
            <Icon d={ICONS.event} />
            <ButtonLabel>Añadir</ButtonLabel>
          </OutlinedButton>
        </DateRow>
        <WideButton>
          <Icon d={ICONS.link} />
          <ButtonLabel>Ir a la web del organizador</ButtonLabel>
        </WideButton>
        <Description>
          Es una batida en el entorno de la variante sur. Toda ayuda es bienvenida.
        </Description>
      </Details>

      <NavBar>
        <NavButton aria-label="Atrás">
          <svg width="18" height="30" viewBox="0 0 18 30" fill="none" stroke="currentColor" strokeWidth="4" aria-hidden="true">
            <path d="M16 1.500L3 15l13 13.500" />
          </svg>
        </NavButton>
        <NavButton aria-label="Inicio">
          <HomePill />
        </NavButton>
      </NavBar>
    </Screen>
  );
}
